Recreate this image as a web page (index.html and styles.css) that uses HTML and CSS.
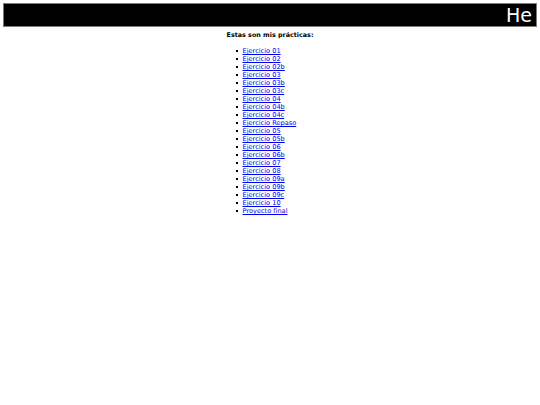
FILE: index.html
```html
<!DOCTYPE html>
<html lang="es">
<head>
<meta charset="utf-8">
<title>Prácticas</title>
<link rel="stylesheet" href="styles.css">
</head>
<body>
<div class="banner"><span class="banner-text">He</span></div>
<div class="content">
  <h1 class="title">Estas son mis prácticas:</h1>
  <ul class="list">
    <li><a href="#">Ejercicio 01</a></li>
    <li><a href="#">Ejercicio 02</a></li>
    <li><a href="#">Ejercicio 02b</a></li>
    <li><a href="#">Ejercicio 03</a></li>
    <li><a href="#">Ejercicio 03b</a></li>
    <li><a href="#">Ejercicio 03c</a></li>
    <li><a href="#">Ejercicio 04</a></li>
    <li><a href="#">Ejercicio 04b</a></li>
    <li><a href="#">Ejercicio 04c</a></li>
    <li><a href="#">Ejercicio Repaso</a></li>
    <li><a href="#">Ejercicio 05</a></li>
    <li><a href="#">Ejercicio 05b</a></li>
    <li><a href="#">Ejercicio 06</a></li>
    <li><a href="#">Ejercicio 06b</a></li>
    <li><a href="#">Ejercicio 07</a></li>
    <li><a href="#">Ejercicio 08</a></li>
    <li><a href="#">Ejercicio 09a</a></li>
    <li><a href="#">Ejercicio 09b</a></li>
    <li><a href="#">Ejercicio 09c</a></li>
    <li><a href="#">Ejercicio 10</a></li>
    <li><a href="#">Proyecto final</a></li>
  </ul>
</div>
</body>
</html>
```
FILE: styles.css
```css
html, body {
  margin: 0;
  padding: 0;
  background: #ffffff;
}
body {
  padding: 3px;
  font-family: "DejaVu Sans", Verdana, sans-serif;
  font-size: 7px;
  color: #000;
}
.banner {
  background: #000;
  border: 1px solid #7a7a7a;
  height: 22px;
  overflow: hidden;
  white-space: nowrap;
  text-align: right;
  padding-right: 4px;
}
.banner-text {
  color: #fff;
  font-size: 19px;
  line-height: 22px;
  display: inline-block;
}
.content {
  width: fit-content;
  margin: 0 auto;
}
.title {
  font-size: 6.4px;
  font-weight: bold;
  text-align: center;
  margin: 4px 0 0;
  line-height: 8px;
}
.list {
  margin: 8px 0 0;
  padding-left: 16px;
  font-size: 6.6px;
  line-height: 8px;
  list-style: none;
}
.list li {
  position: relative;
}
.list li::before {
  content: "";
  position: absolute;
  left: -7px;
  top: 3px;
  width: 2px;
  height: 2px;
  background: #000;
}
.list a {
  color: #0000ee;
}
```
